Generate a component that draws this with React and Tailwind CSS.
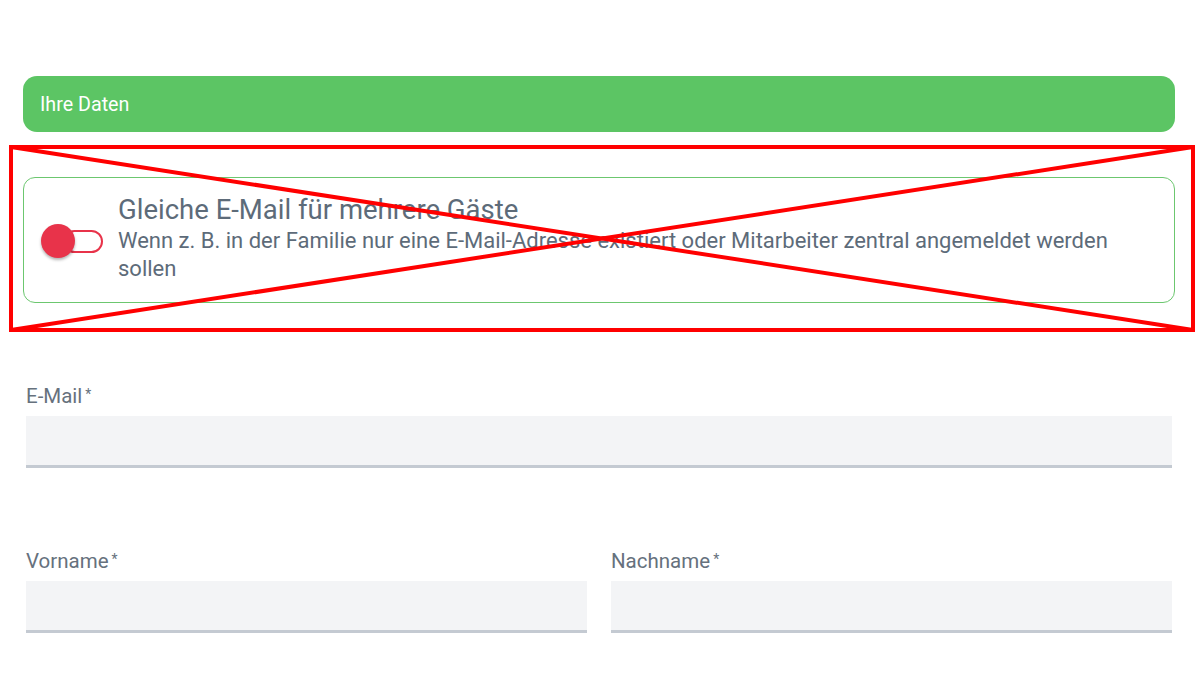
import React from "react";

function Field({ label, className = "" }) {
  return (
    <div className={`flex flex-col ${className}`}>
      <label className="text-[20.5px] leading-[26px] text-[#66717d] mb-[7px]">
        {label}
        <span className="text-[14px] align-top ml-[3px] relative top-[-2px]">*</span>
      </label>
      <div className="h-[52px] bg-[#f3f4f6] border-b-[3px] border-[#c4cad2]" />
    </div>
  );
}

export default function App() {
  return (
    <div
      className="min-h-screen bg-white pt-[76px] pl-[23px] pr-[25px]"
      style={{ fontFamily: "Roboto, 'Liberation Sans', sans-serif" }}
    >
      {/* Section header */}
      <div className="h-[56px] rounded-[14px] bg-[#5cc564] flex items-center px-[17px]">
        <span className="text-white text-[19.7px] relative top-[1px]">Ihre Daten</span>
      </div>

      {/* Crossed-out block */}
      <div className="relative mt-[13px] -ml-[14px] -mr-[19px] pt-[32px] pb-[28px] pl-[14px] pr-[19px]">
        <div className="border border-[#6cc76f] rounded-[12px] h-[126px] flex items-start pl-[17px] pr-[20px] pt-[15px]">
          <div className="relative w-[62px] h-[34px] mt-[31px] shrink-0">
            <div className="absolute left-[22px] top-[6px] w-[40px] h-[23px] rounded-full border-2 border-[#e8334a] bg-white" />
            <div className="absolute left-0 top-0 w-[34px] h-[34px] rounded-full bg-[#e8334a] shadow-[0_2px_3px_rgba(0,0,0,0.3)]" />
          </div>
          <div className="ml-[15px] text-[#5d6b79]">
            <div className="text-[27.5px] leading-[34px]">Gleiche E-Mail für mehrere Gäste</div>
            <div className="text-[22px] leading-[28px]">
              Wenn z. B. in der Familie nur eine E-Mail-Adresse existiert oder Mitarbeiter zentral angemeldet werden sollen
            </div>
          </div>
        </div>
        <svg
          className="absolute left-0 top-0 w-[1186px] h-[187px] pointer-events-none"
          viewBox="0 0 1186 187"
        >
          <rect x="2" y="2" width="1182" height="183" fill="none" stroke="#ff0000" strokeWidth="4" />
          <line x1="2" y1="2" x2="1184" y2="185" stroke="#ff0000" strokeWidth="4" />
          <line x1="1184" y1="2" x2="2" y2="185" stroke="#ff0000" strokeWidth="4" />
        </svg>
      </div>

      {/* Form */}
      <div className="px-[3px] mt-[52px]">
        <Field label="E-Mail" />
        <div className="grid grid-cols-2 gap-[24px] mt-[80px]">
          <Field label="Vorname" />
          <Field label="Nachname" />
        </div>
      </div>
    </div>
  );
}
